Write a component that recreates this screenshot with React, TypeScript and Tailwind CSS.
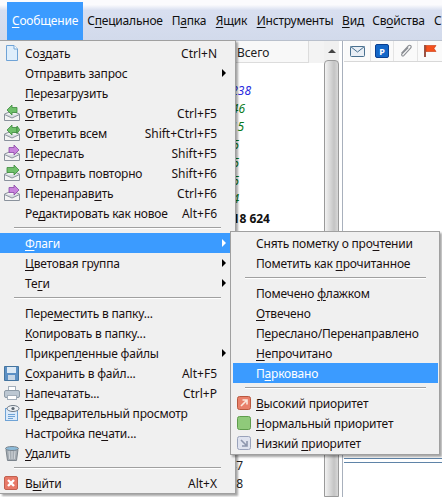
import { type ReactNode } from 'react';

type IconName =
  | 'new' | 'reply' | 'replyAll' | 'forward' | 'resend' | 'redirect'
  | 'save' | 'print' | 'preview' | 'trash' | 'exit' | 'high' | 'normal' | 'low';

function Envelope() {
  return (
    <>
      <path d="M.5 9 L8 6 L15.5 9 V15.5 H.5 Z" fill="#f4f4f4" stroke="#8a929c" />
      <path d="M.5 9.5 L8 13 L15.5 9.5" fill="#d9dde2" stroke="#8a929c" />
    </>
  );
}

function Icon({ name }: { name: IconName }) {
  const box = 'h-4 w-4 shrink-0';
  switch (name) {
    case 'new':
      return (
        <svg viewBox="0 0 16 16" className={box}>
          <path d="M2.5 .5 H10 L13.5 4 V15.5 H2.5 Z" fill="#dfeefb" stroke="#6fa3d6" />
          <path d="M10 .5 V4 H13.5" fill="#fff" stroke="#6fa3d6" />
        </svg>
      );
    case 'reply':
    case 'replyAll':
      return (
        <svg viewBox="0 0 16 16" className={box}>
          <Envelope />
          <path d="M3 5 L8 0 V2.5 H13 V7.5 H8 V10 Z" fill="#6fbf6a" stroke="#3c8a3c" strokeWidth=".8" />
          {name === 'replyAll' && <path d="M13 1 L15.8 4.8 L13 8.5 Z" fill="#6fbf6a" stroke="#3c8a3c" strokeWidth=".8" />}
        </svg>
      );
    case 'forward':
    case 'redirect':
      return (
        <svg viewBox="0 0 16 16" className={box}>
          <Envelope />
          <path d="M15 5 L10 0 V2.5 H5 V7.5 H10 V10 Z" fill="#c884dc" stroke="#8a48a6" strokeWidth=".8" />
        </svg>
      );
    case 'resend':
      return (
        <svg viewBox="0 0 16 16" className={box}>
          <Envelope />
          <path d="M15 5 L10 0 V2.5 H3 V7.5 H10 V10 Z" fill="#6fbf6a" stroke="#3c8a3c" strokeWidth=".8" />
        </svg>
      );
    case 'save':
      return (
        <svg viewBox="0 0 16 16" className={box}>
          <path d="M.5 1.5 H14.5 V15.5 H.5 Z" fill="#5b8fc4" stroke="#44749f" />
          <rect x="3" y="2" width="9" height="6" fill="#dce9f5" />
          <rect x="4" y="10" width="7" height="5" fill="#c4d5e6" />
        </svg>
      );
    case 'print':
      return (
        <svg viewBox="0 0 16 16" className={box}>
          <rect x="4.5" y="1.5" width="7" height="4" fill="#fff" stroke="#a3aeba" />
          <rect x=".5" y="5.5" width="15" height="7" rx="1.5" fill="#bcc7d2" stroke="#8d9aa6" />
          <rect x="3.5" y="10.5" width="9" height="4" fill="#fff" stroke="#a3aeba" />
        </svg>
      );
    case 'preview':
      return (
        <svg viewBox="0 0 16 16" className={box}>
          <rect x="1.5" y="3.5" width="12" height="12" fill="#dbeafa" stroke="#6fa3d6" />
          <path d="M4 9.5 H11 M4 11.5 H11 M4 13.5 H9" stroke="#6fa3d6" />
          <ellipse cx="9" cy="3.5" rx="6" ry="3" fill="#eef1f4" stroke="#6d7884" />
          <circle cx="9" cy="3.5" r="1.6" fill="#5b6670" />
        </svg>
      );
    case 'trash':
      return (
        <svg viewBox="0 0 16 16" className={box}>
          <path d="M2 4.5 H14 L12.5 15.5 H3.5 Z" fill="#a4abb2" stroke="#7c848c" />
          <path d="M5 6 L5.7 14 M8 6 V14 M11 6 L10.3 14" stroke="#d3d7db" />
          <ellipse cx="8" cy="3.5" rx="6.5" ry="2" fill="#8dbbd9" stroke="#7c848c" />
        </svg>
      );
    case 'exit':
      return (
        <svg viewBox="0 0 16 16" className={box}>
          <rect x=".5" y="1.5" width="13" height="13" rx="1.5" fill="#e87967" stroke="#c0604f" />
          <path d="M4 5 L10 11 M10 5 L4 11" stroke="#fff" strokeWidth="2.4" />
        </svg>
      );
    case 'high':
      return (
        <svg viewBox="0 0 14 14" className="h-[14px] w-[14px] shrink-0">
          <rect x=".5" y=".5" width="13" height="13" rx="2" fill="#e8806a" stroke="#b9583f" />
          <path d="M4 10 L9.5 4.5 M5.5 4 H10 V8.5" fill="none" stroke="#fbe7dc" strokeWidth="1.6" />
        </svg>
      );
    case 'normal':
      return (
        <svg viewBox="0 0 14 14" className="h-[14px] w-[14px] shrink-0">
          <rect x=".5" y=".5" width="13" height="13" rx="2" fill="#8fca7a" stroke="#5e9d4c" />
        </svg>
      );
    case 'low':
      return (
        <svg viewBox="0 0 14 14" className="h-[14px] w-[14px] shrink-0">
          <rect x=".5" y=".5" width="13" height="13" rx="2" fill="#dfe3ef" stroke="#9aa3bb" />
          <path d="M4 4 L9.5 9.5 M10 5 V10 H5" fill="none" stroke="#8d96ad" strokeWidth="1.6" />
        </svg>
      );
  }
}

// k marks the letter that gets the mnemonic underline
function Label({ text, k }: { text: string; k: number }) {
  return (
    <>
      {text.slice(0, k)}
      <span className="underline underline-offset-2">{text[k]}</span>
      {text.slice(k + 1)}
    </>
  );
}

type Row = { text: string; k: number; icon?: IconName; keys?: string; arrow?: boolean; active?: boolean };

const MAIN: (Row | 'sep')[] = [
  { text: 'Создать', k: 2, icon: 'new', keys: 'Ctrl+N' },
  { text: 'Отправить запрос', k: 4, arrow: true },
  { text: 'Перезагрузить', k: 0 },
  { text: 'Ответить', k: 0, icon: 'reply', keys: 'Ctrl+F5' },
  { text: 'Ответить всем', k: 1, icon: 'replyAll', keys: 'Shift+Ctrl+F5' },
  { text: 'Переслать', k: 0, icon: 'forward', keys: 'Shift+F5' },
  { text: 'Отправить повторно', k: 5, icon: 'resend', keys: 'Shift+F6' },
  { text: 'Перенаправить', k: 10, icon: 'redirect', keys: 'Ctrl+F6' },
  { text: 'Редактировать как новое', k: 2, keys: 'Alt+F6' },
  'sep',
  { text: 'Флаги', k: 0, arrow: true, active: true },
  { text: 'Цветовая группа', k: 0, arrow: true },
  { text: 'Теги', k: 2, arrow: true },
  'sep',
  { text: 'Переместить в папку...', k: 4 },
  { text: 'Копировать в папку...', k: 0 },
  { text: 'Прикрепленные файлы', k: 7, arrow: true },
  { text: 'Сохранить в файл...', k: 0, icon: 'save', keys: 'Alt+F5' },
  { text: 'Напечатать...', k: 0, icon: 'print', keys: 'Ctrl+P' },
  { text: 'Предварительный просмотр', k: 1, icon: 'preview' },
  { text: 'Настройка печати...', k: 12 },
  { text: 'Удалить', k: 0, icon: 'trash' },
  'sep',
  { text: 'Выйти', k: 1, icon: 'exit', keys: 'Alt+X' },
];

const FLAGS: (Row | 'sep')[] = [
  { text: 'Снять пометку о прочтении', k: 19 },
  { text: 'Пометить как прочитанное', k: 13 },
  'sep',
  { text: 'Помечено флажком', k: 9 },
  { text: 'Отвечено', k: 0 },
  { text: 'Переслано/Перенаправлено', k: 1 },
  { text: 'Непрочитано', k: 0 },
  { text: 'Парковано', k: 1, active: true },
  'sep',
  { text: 'Высокий приоритет', k: 0, icon: 'high' },
  { text: 'Нормальный приоритет', k: 0, icon: 'normal' },
  { text: 'Низкий приоритет', k: 7, icon: 'low' },
];

function MenuRows({ rows, textLeft, sepClass, iconPos }: { rows: (Row | 'sep')[]; textLeft: string; sepClass: string; iconPos: string }) {
  return (
    <>
      {rows.map((r, i) =>
        r === 'sep' ? (
          <div key={i} className={`h-[10px] py-1 ${sepClass}`}>
            <div className="h-px bg-[#a0a0a0] shadow-[0_1px_0_#fff]" />
          </div>
        ) : (
          <div
            key={i}
            className={`relative flex h-5 items-center pr-[18px] ${textLeft} ${
              r.active ? 'bg-[#3b9bff] text-white' : 'text-[#1a1010]'
            }`}
          >
            {r.icon && (
              <span className={`absolute ${iconPos}`}>
                <Icon name={r.icon} />
              </span>
            )}
            <span className="flex-1 whitespace-nowrap pt-px tracking-[-0.2px]">
              <Label text={r.text} k={r.k} />
            </span>
            {r.keys && <span className="whitespace-nowrap pt-px">{r.keys}</span>}
            {r.arrow && (
              <span
                className={`absolute right-[9px] top-[6px] h-0 w-0 border-y-4 border-l-4 border-y-transparent ${
                  r.active ? 'border-l-white' : 'border-l-black'
                }`}
              />
            )}
          </div>
        ),
      )}
    </>
  );
}

function MenuTitle({ children, active, width }: { children: ReactNode; active?: boolean; width: string }) {
  return (
    <div
      className={`flex h-[38px] shrink-0 items-center justify-center whitespace-nowrap tracking-[-0.2px] ${width} ${
        active ? 'bg-[#3b9bff] text-white' : 'text-[#101010]'
      }`}
    >
      <span>{children}</span>
    </div>
  );
}

// numbers are right aligned, the open menu hides their left part
const COUNTS = [
  { v: '238', c: 'w-[51px] text-[#2a2ae0] italic' },
  { v: '146', c: 'w-[45px] text-[#0a7a20] italic' },
  { v: '115', c: 'w-[44px] text-[#0a7a20] italic' },
  { v: '15', c: 'w-[39px] text-[#0a7a20] italic' },
  { v: '15', c: 'w-[39px] text-[#0a7a20] italic' },
  { v: '15', c: 'w-[39px] text-[#0a7a20] italic' },
  { v: '14', c: 'w-[39px] text-[#0a7a20] italic' },
];

export default function App() {
  return (
    <div className="relative h-[497px] w-[442px] overflow-hidden bg-white font-['Noto_Sans',sans-serif] text-[12px] leading-none">
      <div className="flex h-[40px] bg-[linear-gradient(#fbfbfd,#fbfbfd_12%,#d8dff0_26%,#d2daeb)] pl-[7px] pt-[2px]">
        <MenuTitle active width="w-[76px]">
          <Label text="Сообщение" k={0} />
        </MenuTitle>
        <MenuTitle width="w-[84px]"><Label text="Специальное" k={1} /></MenuTitle>
        <MenuTitle width="w-[44px]"><Label text="Папка" k={1} /></MenuTitle>
        <MenuTitle width="w-[41px]"><Label text="Ящик" k={0} /></MenuTitle>
        <MenuTitle width="w-[86px]"><Label text="Инструменты" k={0} /></MenuTitle>
        <MenuTitle width="w-[30px]"><Label text="Вид" k={0} /></MenuTitle>
        <MenuTitle width="w-[61px]"><Label text="Свойства" k={2} /></MenuTitle>
        <span className="self-center pl-[5px] text-[#101010]">С</span>
      </div>
      <div className="flex h-[457px] border-t border-[#b9c0cc]">
        <div className="w-[326px] overflow-hidden">
          <div className="flex h-[22px] bg-[#f3f3f3] pl-[236px]">
            <div className="flex w-[73px] items-center border-b border-r border-[#dcdcdc] bg-[#f8f8f8] pl-[1px] pt-[2px] text-[#222]">Всего</div>
          </div>
          <div className="pl-[200px] pt-[22px]">
            {COUNTS.map((c, i) => (
              <div key={i} className={`h-[18px] text-right ${c.c}`}>{c.v}</div>
            ))}
            <div className="mt-[2px] h-[18px] w-[70px] text-right font-bold text-[#111]">18 624</div>
            <div className="mt-[211px] h-[18px] w-[43px] text-right text-[#222]">15</div>
            <div className="h-[18px] w-[43px] text-right text-[#222]">47</div>
            <div className="h-[18px] w-[43px] text-right text-[#222]">78</div>
          </div>
        </div>
        <div className="flex w-[15px] flex-col bg-[#f0f0f0]">
          <div className="flex h-[19px] items-center justify-center">
            <span className="h-0 w-0 border-x-4 border-b-4 border-x-transparent border-b-[#444]" />
          </div>
          <div className="flex-1 rounded-t-sm border border-[#9a9a9a] bg-[linear-gradient(90deg,#f2f2f2,#c4c4c4_70%,#d8d8d8)]" />
        </div>
        <div className="w-[3px]" />
        <div className="flex flex-1 flex-col border-l border-[#a8b0bc] pl-[1px]">
          <div className="flex h-[21px] items-center border-b border-[#d8d8d8] bg-[#fafafa]">
            <div className="flex h-full w-[27px] items-center justify-center border-r border-[#e4e4e4]">
              <svg viewBox="0 0 15 11" className="h-[11px] w-[15px]">
                <rect x=".5" y=".5" width="14" height="10" rx="1" fill="#e8eef5" stroke="#49708f" />
                <path d="M.5 .5 L7.5 6 L14.5 .5" fill="none" stroke="#49708f" />
              </svg>
            </div>
            <div className="flex h-full w-[23px] items-center justify-center border-r border-[#e4e4e4]">
              <span className="flex h-[14px] w-[14px] items-center justify-center rounded-[2px] border border-[#0a3f90] bg-[#1467c8] text-[9px] font-bold text-white">P</span>
            </div>
            <div className="flex h-full w-[24px] items-center justify-center border-r border-[#e4e4e4]">
              <svg viewBox="0 0 14 14" className="h-4 w-4">
                <path d="M3 9 L9 2.5 C10.5 1 12.5 3 11 4.5 L5 11 C4 12 2.5 10.5 3.5 9.5 L9 4" fill="none" stroke="#8c8f94" />
              </svg>
            </div>
            <div className="flex h-full w-[24px] items-center justify-center">
              <svg viewBox="0 0 14 14" className="h-[14px] w-[14px]">
                <path d="M2 1 V13" stroke="#7a1c08" strokeWidth="1.5" />
                <path d="M3 1.5 H13 L11 4.5 L13 7.5 H3 Z" fill="#f4511e" stroke="#c8360c" strokeWidth=".6" />
              </svg>
            </div>
          </div>
          <div className="mt-[396px] h-[5px] border-y border-[#5f84a8]" />
        </div>
      </div>

      <div className="absolute left-0 top-[40px] h-[454px] w-[236px] border border-l-0 border-[#a0a0a0] bg-[#f0f0f0] pt-[2px] shadow-[2px_2px_2px_rgba(0,0,0,.35)]">
        <MenuRows rows={MAIN} textLeft="pl-[25px]" sepClass="pl-[14px] pr-[14px]" iconPos="left-[4px] top-[2px]" />
      </div>
      <div className="absolute left-[230px] top-[231px] h-[224px] w-[210px] border border-[#a0a0a0] bg-[#f0f0f0] pl-[2px] pr-[1px] pt-px shadow-[2px_2px_2px_rgba(0,0,0,.35)]">
        <MenuRows rows={FLAGS} textLeft="pl-[23px]" sepClass="pl-[12px] pr-[12px]" iconPos="left-[4px] top-[3px]" />
      </div>
    </div>
  );
}
